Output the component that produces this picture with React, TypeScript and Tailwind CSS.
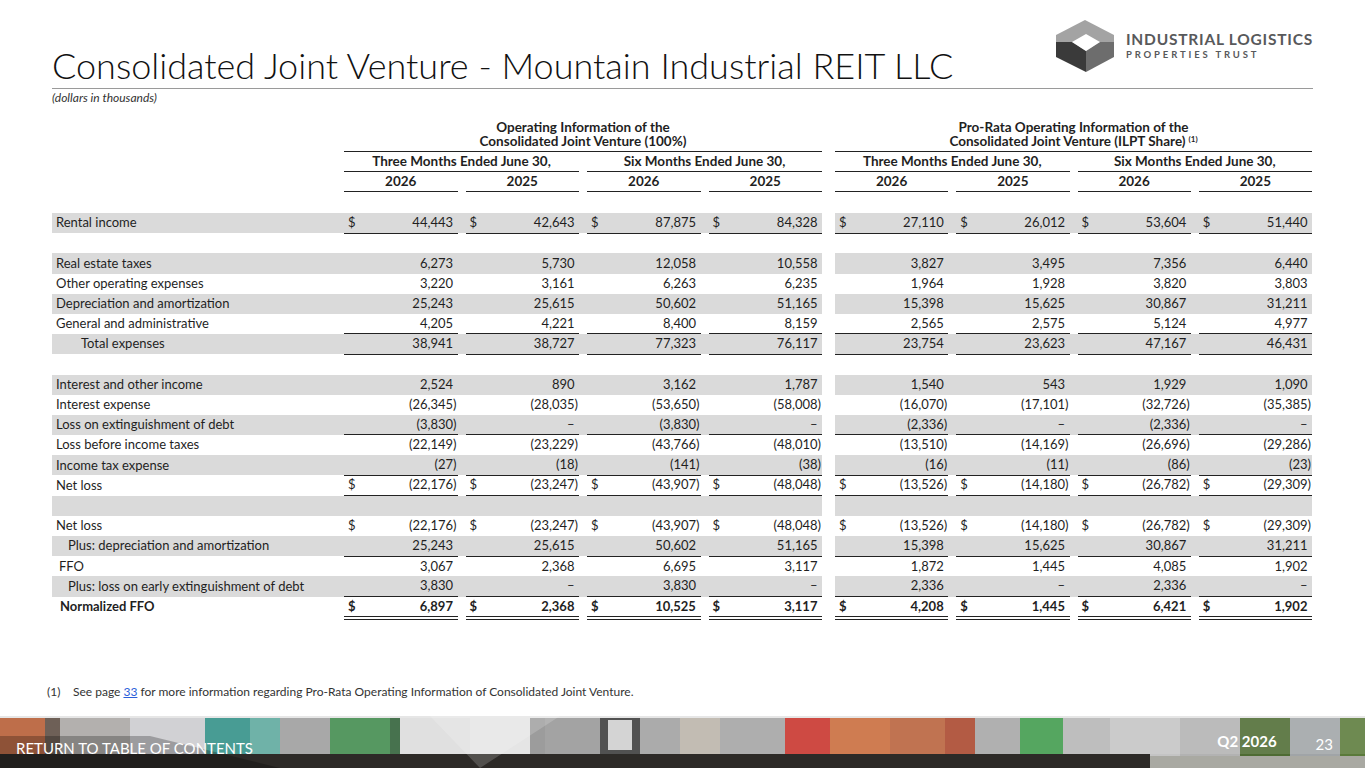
import clsx from "clsx";

type Line = "single" | "double" | undefined;

interface RowDef {
  label: string;
  vals?: string[];
  shade?: boolean;
  line?: Line;
  dollar?: boolean;
  bold?: boolean;
  indent?: string;
}

const rows: RowDef[] = [
  {
    label: "Rental income",
    vals: ["44,443", "42,643", "87,875", "84,328", "27,110", "26,012", "53,604", "51,440"],
    shade: true,
    line: "single",
    dollar: true,
  },
  { label: "" },
  {
    label: "Real estate taxes",
    vals: ["6,273", "5,730", "12,058", "10,558", "3,827", "3,495", "7,356", "6,440"],
    shade: true,
  },
  {
    label: "Other operating expenses",
    vals: ["3,220", "3,161", "6,263", "6,235", "1,964", "1,928", "3,820", "3,803"],
  },
  {
    label: "Depreciation and amortization",
    vals: ["25,243", "25,615", "50,602", "51,165", "15,398", "15,625", "30,867", "31,211"],
    shade: true,
  },
  {
    label: "General and administrative",
    vals: ["4,205", "4,221", "8,400", "8,159", "2,565", "2,575", "5,124", "4,977"],
    line: "single",
  },
  {
    label: "Total expenses",
    vals: ["38,941", "38,727", "77,323", "76,117", "23,754", "23,623", "47,167", "46,431"],
    shade: true,
    line: "single",
    indent: "pl-[29px]",
  },
  { label: "" },
  {
    label: "Interest and other income",
    vals: ["2,524", "890", "3,162", "1,787", "1,540", "543", "1,929", "1,090"],
    shade: true,
  },
  {
    label: "Interest expense",
    vals: ["(26,345)", "(28,035)", "(53,650)", "(58,008)", "(16,070)", "(17,101)", "(32,726)", "(35,385)"],
  },
  {
    label: "Loss on extinguishment of debt",
    vals: ["(3,830)", "–", "(3,830)", "–", "(2,336)", "–", "(2,336)", "–"],
    shade: true,
    line: "single",
  },
  {
    label: "Loss before income taxes",
    vals: ["(22,149)", "(23,229)", "(43,766)", "(48,010)", "(13,510)", "(14,169)", "(26,696)", "(29,286)"],
  },
  {
    label: "Income tax expense",
    vals: ["(27)", "(18)", "(141)", "(38)", "(16)", "(11)", "(86)", "(23)"],
    shade: true,
    line: "single",
  },
  {
    label: "Net loss",
    vals: ["(22,176)", "(23,247)", "(43,907)", "(48,048)", "(13,526)", "(14,180)", "(26,782)", "(29,309)"],
    line: "double",
    dollar: true,
  },
  { label: "", shade: true },
  {
    label: "Net loss",
    vals: ["(22,176)", "(23,247)", "(43,907)", "(48,048)", "(13,526)", "(14,180)", "(26,782)", "(29,309)"],
    dollar: true,
  },
  {
    label: "Plus: depreciation and amortization",
    vals: ["25,243", "25,615", "50,602", "51,165", "15,398", "15,625", "30,867", "31,211"],
    shade: true,
    line: "single",
    indent: "pl-[16px]",
  },
  {
    label: "FFO",
    vals: ["3,067", "2,368", "6,695", "3,117", "1,872", "1,445", "4,085", "1,902"],
    indent: "pl-[7px]",
  },
  {
    label: "Plus: loss on early extinguishment of debt",
    vals: ["3,830", "–", "3,830", "–", "2,336", "–", "2,336", "–"],
    shade: true,
    line: "single",
    indent: "pl-[16px]",
  },
  {
    label: "Normalized FFO",
    vals: ["6,897", "2,368", "10,525", "3,117", "4,208", "1,445", "6,421", "1,902"],
    line: "double",
    dollar: true,
    bold: true,
    indent: "pl-[8px]",
  },
];

function Num({ v }: { v: string }) {
  const neg = v.startsWith("(");
  return (
    <span>
      {v}
      {!neg && <span className="invisible">)</span>}
    </span>
  );
}

function Cell({ v, line, dollar }: { v?: string; line: Line; dollar?: boolean }) {
  return (
    <div
      className={clsx(
        "flex h-full items-center justify-between pl-1 pr-px",
        line === "single" && "border-b-[1.5px] border-[#222]",
        line === "double" && "border-b-4 border-double border-[#222]"
      )}
    >
      <span>{dollar ? "$" : ""}</span>
      {v ? <Num v={v} /> : null}
    </div>
  );
}

function Row({ r }: { r: RowDef }) {
  const vals = r.vals ?? [];
  return (
    <div className={clsx("flex h-[20.2px]", r.bold && "font-bold")}>
      <div className={clsx("flex w-[770px]", r.shade && "bg-[#dadada]")}>
        <div className={clsx("flex w-[292px] items-center", r.indent ?? "pl-1")}>{r.label}</div>
        <div className="grid w-[478px] grid-cols-4 gap-2">
          {vals.slice(0, 4).map((v, i) => (
            <Cell key={i} v={v} line={r.line} dollar={r.dollar} />
          ))}
        </div>
      </div>
      <div className="w-[13px]" />
      <div className={clsx("grid w-[477px] grid-cols-4 gap-2", r.shade && "bg-[#dadada]")}>
        {vals.slice(4).map((v, i) => (
          <Cell key={i} v={v} line={r.line} dollar={r.dollar} />
        ))}
      </div>
    </div>
  );
}

function GroupHead({ line1, line2, width, note }: { line1: string; line2: string; width: string; note?: boolean }) {
  return (
    <div className={clsx(width, "text-[13.5px]")}>
      <div className="border-b-[1.5px] border-[#222] pb-[2.5px] text-center leading-[14px]">
        <div>{line1}</div>
        <div>
          {line2}
          {note && <sup className="ml-[3px] text-[8px] font-bold">(1)</sup>}
        </div>
      </div>
      <div className="grid grid-cols-2 gap-2">
        {["Three Months Ended June 30,", "Six Months Ended June 30,"].map((p) => (
          <div key={p} className="flex h-[20.5px] items-center justify-center border-b-[1.5px] border-[#222]">
            {p}
          </div>
        ))}
      </div>
      <div className="grid grid-cols-4 gap-2">
        {["2026", "2025", "2026", "2025"].map((y, i) => (
          <div key={i} className="flex h-[20px] items-center justify-center border-b-[1.5px] border-[#222]">
            {y}
          </div>
        ))}
      </div>
    </div>
  );
}

function Logo() {
  return (
    <div className="mt-[20px] flex items-center gap-[12px] self-start">
      <svg width="58" height="52" viewBox="0 0 58 52">
        <polygon points="29,0 58,15 58,22 30,36 0,22 0,15" fill="#a3a3a3" />
        <polygon points="0,22 16,22 30,31 30,52 0,37" fill="#3a3a3a" />
        <polygon points="58,22 44,22 30,31 30,52 58,37" fill="#6d6d6d" />
        <polygon points="30,14 44,22 30,31 16,22" fill="#ffffff" />
      </svg>
      <div className="font-['Lato'] font-bold text-[#58595b]">
        <div className="text-[15.5px] leading-[17px] tracking-[0.05em]">INDUSTRIAL LOGISTICS</div>
        <div className="text-[9.5px] leading-[13px] tracking-[0.3em]">PROPERTIES TRUST</div>
      </div>
    </div>
  );
}

function PhotoBand() {
  const blocks: [number, number, string][] = [
    [0, 45, "#b65a32"],
    [45, 60, "#5b4b40"],
    [60, 130, "#a9a6a3"],
    [130, 205, "#cbcbce"],
    [205, 250, "#2f8f86"],
    [250, 280, "#5ca89d"],
    [280, 330, "#9c9c9c"],
    [330, 390, "#3f8a4c"],
    [390, 400, "#2e5f36"],
    [400, 470, "#dcdcdc"],
    [470, 530, "#e2e2e2"],
    [530, 545, "#8f8f8f"],
    [545, 600, "#979797"],
    [600, 640, "#3a3a3a"],
    [640, 680, "#a0a0a0"],
    [680, 720, "#bab3a9"],
    [720, 785, "#a3a3a3"],
    [785, 830, "#c8322a"],
    [830, 890, "#c96a3a"],
    [890, 945, "#b8603a"],
    [945, 975, "#a9452b"],
    [975, 1020, "#a6a6a6"],
    [1020, 1063, "#3e9a4a"],
    [1063, 1110, "#b5b5b5"],
    [1110, 1180, "#c4c4c4"],
    [1180, 1240, "#b2b2b2"],
    [1240, 1290, "#4e6b33"],
    [1290, 1340, "#a0a4a7"],
    [1340, 1365, "#5a7a3a"],
  ];
  return (
    <svg className="absolute inset-0" width="1365" height="52" viewBox="0 0 1365 52" preserveAspectRatio="none">
      {blocks.map(([a, b, c]) => (
        <rect key={a} x={a} y={0} width={b - a} height={52} fill={c} />
      ))}
      <rect x="608" y="4" width="24" height="30" fill="#cfcfcf" />
      <rect x="0" y="0" width="1365" height="38" fill="#fff" opacity="0.12" />
      <rect x="0" y="38" width="1150" height="14" fill="#2d2a27" />
      <rect x="1150" y="40" width="215" height="12" fill="#a9a9a2" />
      <rect x="0" y="0" width="1365" height="2" fill="#e6e6e6" />
      <polygon points="0,52 0,20 150,20 280,52" fill="#000" opacity="0.25" />
      <polygon points="430,0 560,0 480,52" fill="#fff" opacity="0.18" />
    </svg>
  );
}

export default function App() {
  return (
    <div className="relative flex h-[768px] w-[1365px] flex-col overflow-hidden bg-white font-['Lato'] text-[#1f1f1f]">
      <div className="flex flex-1 flex-col px-[52px]">
        <div className="flex h-[89px] justify-between border-b border-[#9a9a9a]">
          <h1 className="self-end pb-[5px] text-[36px] leading-none font-light text-[#111]">
            Consolidated Joint Venture - Mountain Industrial REIT LLC
          </h1>
          <Logo />
        </div>
        <div className="mt-[2px] text-[12px] leading-[14px] italic text-[#333]">(dollars in thousands)</div>

        <div className="mt-[15px] text-[13px]">
          <div className="flex font-bold">
            <div className="w-[292px]" />
            <GroupHead line1="Operating Information of the" line2="Consolidated Joint Venture (100%)" width="w-[478px]" />
            <div className="w-[13px]" />
            <GroupHead
              line1="Pro-Rata Operating Information of the"
              line2="Consolidated Joint Venture (ILPT Share)"
              width="w-[477px]"
              note
            />
          </div>
          <div className="h-[21px]" />
          {rows.map((r, i) => (
            <Row key={i} r={r} />
          ))}
        </div>

        <div className="mt-auto flex pb-[17px] text-[12px] leading-[14px] text-[#333]">
          <span className="-ml-[5px] w-[26px]">(1)</span>
          <span>
            See page <span className="text-[#2b5fd9] underline">33</span> for more information regarding Pro-Rata
            Operating Information of Consolidated Joint Venture.
          </span>
        </div>
      </div>

      <div className="relative h-[52px] shrink-0">
        <PhotoBand />
        <div className="relative flex h-full items-end justify-between pb-[12px] pl-[16px] pr-[32px] text-white">
          <span className="text-[15px] leading-none">RETURN TO TABLE OF CONTENTS</span>
          <div className="flex items-end gap-[39px] text-[15px] leading-none">
            <span className="pb-[7px] font-bold">Q2 2026</span>
            <span className="pb-[4px]">23</span>
          </div>
        </div>
      </div>
    </div>
  );
}
